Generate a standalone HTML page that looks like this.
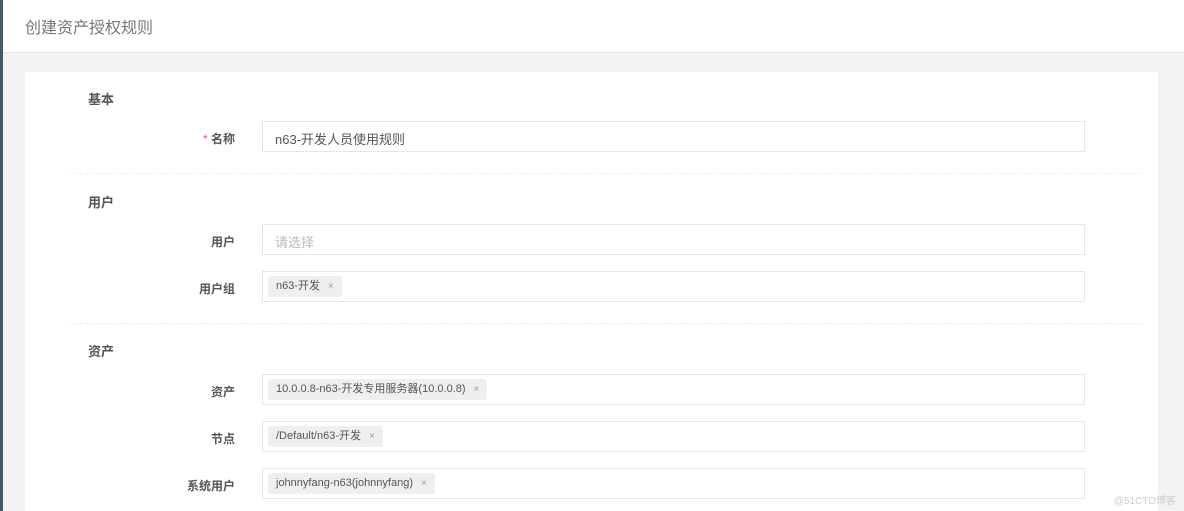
<!DOCTYPE html><html><head><meta charset="utf-8"><style>
html,body{margin:0;width:1184px;height:511px;overflow:hidden}
body{background:#f3f3f4;font-family:"Liberation Sans","Noto Sans CJK SC",sans-serif;position:relative}
.lb{position:absolute;left:0;top:0;width:3px;height:511px;background:#4a5866}
.hd{position:absolute;left:3px;top:0;right:0;height:52px;background:#fff;border-bottom:1px solid #e7eaec}
.hd span{position:absolute;left:22px;top:14px;font-size:16px;color:#777}
.card{position:absolute;left:25px;top:72px;width:1133px;height:439px;background:#fff}
.h{position:absolute;left:88px;font-size:13px;font-weight:bold;color:#555}
.l{position:absolute;right:949px;font-size:12px;font-weight:bold;color:#555;text-align:right}
.i{position:absolute;left:262px;width:821px;height:29px;border:1px solid #e5e6e7;background:#fff}
.t{position:absolute;left:5px;top:4px;height:21px;line-height:21px;background:#efefef;border-radius:3px;padding:0 8px;font-size:11px;color:#555}
.t b{font-weight:normal;color:#999;margin-left:8px;font-size:10px}
.d{position:absolute;left:70px;width:1072px;border-top:1px dashed #eceef0}
.w{position:absolute;right:8px;top:492px;font-size:10px;color:#ccc}
</style></head><body>
<div class="lb"></div>
<div class="hd"><span>创建资产授权规则</span></div>
<div class="card"></div>
<div class="h" style="top:89px">基本</div>
<div class="l" style="top:130px"><span style="color:#ed5565;font-weight:normal">* </span>名称</div>
<div class="i" style="top:121px"><span style="position:absolute;left:12px;top:7px;font-size:13px;color:#555">n63-开发人员使用规则</span></div>
<div class="d" style="top:173px"></div>
<div class="h" style="top:192px">用户</div>
<div class="l" style="top:233px">用户</div>
<div class="i" style="top:224px"><span style="position:absolute;left:12px;top:7px;font-size:13px;color:#bbb">请选择</span></div>
<div class="l" style="top:280px">用户组</div>
<div class="i" style="top:271px"><span class="t">n63-开发<b>×</b></span></div>
<div class="d" style="top:323px"></div>
<div class="h" style="top:341px">资产</div>
<div class="l" style="top:383px">资产</div>
<div class="i" style="top:374px"><span class="t">10.0.0.8-n63-开发专用服务器(10.0.0.8)<b>×</b></span></div>
<div class="l" style="top:430px">节点</div>
<div class="i" style="top:421px"><span class="t">/Default/n63-开发<b>×</b></span></div>
<div class="l" style="top:477px">系统用户</div>
<div class="i" style="top:468px"><span class="t">johnnyfang-n63(johnnyfang)<b>×</b></span></div>
<div class="w">@51CTO博客</div>
</body></html>
